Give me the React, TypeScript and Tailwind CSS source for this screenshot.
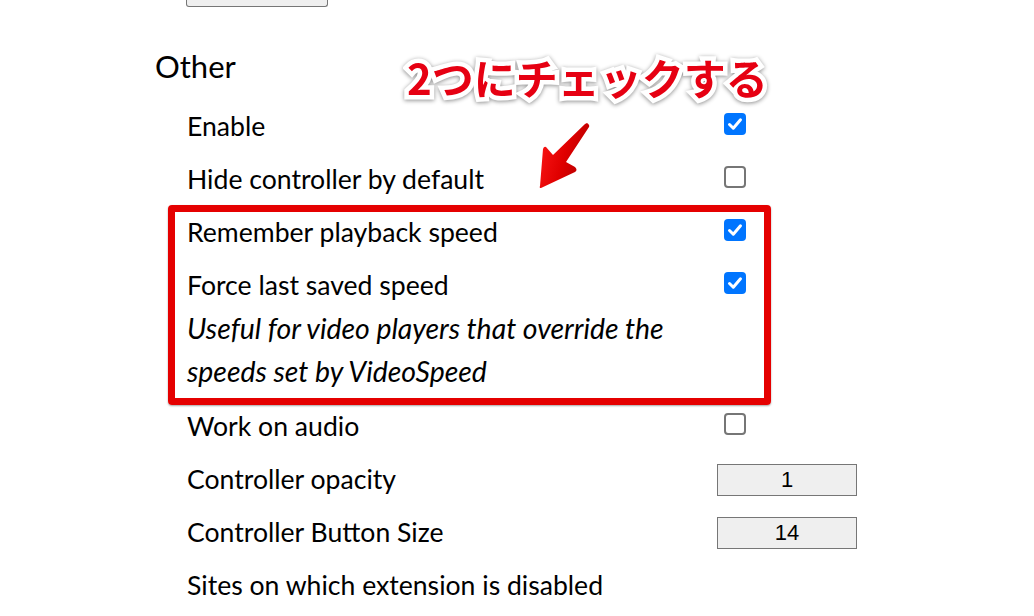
import React from 'react';

type Row =
  | { kind: 'check'; label: string; checked: boolean; note?: string[] }
  | { kind: 'input'; label: string; value: string }
  | { kind: 'text'; label: string };

const ROWS: Row[] = [
  { kind: 'check', label: 'Enable', checked: true },
  { kind: 'check', label: 'Hide controller by default', checked: false },
  { kind: 'check', label: 'Remember playback speed', checked: true },
  {
    kind: 'check',
    label: 'Force last saved speed',
    checked: true,
    note: ['Useful for video players that override the', 'speeds set by VideoSpeed'],
  },
  { kind: 'check', label: 'Work on audio', checked: false },
  { kind: 'input', label: 'Controller opacity', value: '1' },
  { kind: 'input', label: 'Controller Button Size', value: '14' },
  { kind: 'text', label: 'Sites on which extension is disabled' },
];

function Checkbox({ checked }: { checked: boolean }) {
  if (checked) {
    return (
      <span className="ml-[7px] mb-[6px] w-[22px] h-[22px] rounded-[4px] bg-[#0075ff] flex items-center justify-center">
        <svg width="16" height="16" viewBox="0 0 16 16">
          <path d="M2.5 8.5 L6.3 12.2 L13.5 3.8" fill="none" stroke="white" strokeWidth="3" strokeLinecap="round" strokeLinejoin="round" />
        </svg>
      </span>
    );
  }
  return <span className="ml-[7px] mb-[6px] w-[22px] h-[22px] rounded-[4px] border-2 border-[#767676] bg-white" />;
}

function OptionRow({ row }: { row: Row }) {
  return (
    <div>
      <div className="flex items-center h-[53px]">
        <span className="flex-1 text-[26.6px] leading-none text-black">{row.label}</span>
        <div className="w-[140px] flex items-center">
          {row.kind === 'check' && <Checkbox checked={row.checked} />}
          {row.kind === 'input' && (
            <input
              type="text"
              value={row.value}
              readOnly
              className="w-[140px] h-[32px] border border-[#767676] bg-[#efefef] text-center text-[22px] text-black font-['Liberation_Sans',Arial,sans-serif] outline-none"
            />
          )}
        </div>
      </div>
      {row.kind === 'check' && row.note && (
        <div className="-mt-[5px] mb-[7px] italic text-[28.4px] leading-[43px] text-black">
          {row.note.map(line => (
            <div key={line}>{line}</div>
          ))}
        </div>
      )}
    </div>
  );
}

export default function App() {
  return (
    <div className="relative w-[1034px] h-[616px] overflow-hidden bg-white font-['Lato','Noto_Sans',sans-serif]">
      {/* cut-off button from the section above */}
      <div className="ml-[186px] w-[142px] h-[7px] border border-t-0 border-[#767676] bg-[#efefef] rounded-b-[3px]" />

      <h2 className="ml-[155px] mt-[39px] text-[31px] leading-[40px] font-normal text-black">Other</h2>

      <div className="ml-[187px] mt-[14px] w-[670px]">
        {ROWS.map(row => (
          <OptionRow key={row.label} row={row} />
        ))}
      </div>

      {/* annotation: red frame */}
      <div className="absolute left-[168px] top-[205px] w-[603px] h-[200px] border-[7px] border-[#e50000] rounded-[4px] shadow-[0_1px_2px_rgba(0,0,0,0.35)]" />

      {/* annotation: caption */}
      <div className="absolute left-[407px] top-[51px] drop-shadow-[0_1px_2px_rgba(0,0,0,0.45)]">
        <span className="relative block whitespace-nowrap text-[42px] leading-[52px] font-bold font-['Noto_Sans_CJK_JP',sans-serif] text-white [-webkit-text-stroke:9px_white]">
          2つにチェックする
          <span className="absolute inset-0 text-[#e60012] [-webkit-text-stroke:0]">2つにチェックする</span>
        </span>
      </div>

      {/* annotation: arrow */}
      <svg className="absolute left-[530px] top-[115px]" width="70" height="85" viewBox="530 115 70 85">
        <defs>
          <linearGradient id="arrowFill" x1="0" y1="0" x2="1" y2="0.4">
            <stop offset="0" stopColor="#ff1a1a" />
            <stop offset="0.6" stopColor="#e00000" />
            <stop offset="1" stopColor="#b80000" />
          </linearGradient>
        </defs>
        <path
          d="M587 123 Q590 125 589 127 L566 162 L575 167 Q578 170 575 172 L541 188 Q539 188 540 186 L543 149 Q544 146 546 147 L553 155 L585 124 Z"
          fill="url(#arrowFill)"
        />
      </svg>
    </div>
  );
}
